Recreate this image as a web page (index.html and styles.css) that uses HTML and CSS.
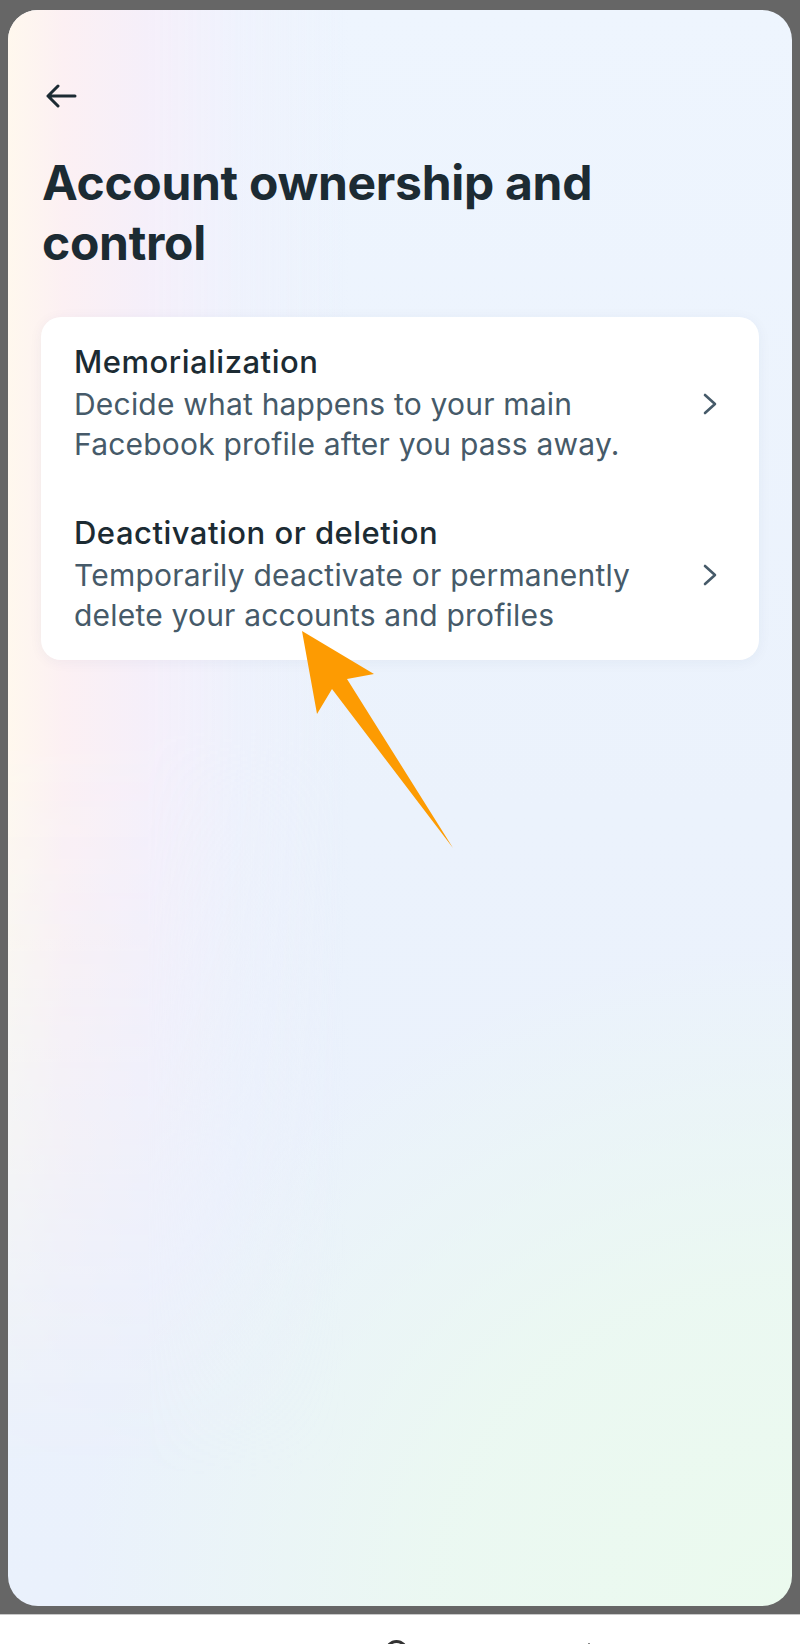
FILE: index.html
```html
<!DOCTYPE html>
<html lang="en">
<head>
    <meta charset="UTF-8">
    <meta name="viewport" content="width=device-width, initial-scale=1.0">
    <link rel="stylesheet" href="styles.css">
    <title>Account ownership and control</title>
</head>
<body>
    <div class="screen">
        <div class="sheet">
            <button class="back" aria-label="Back">
                <svg width="32" height="24" viewBox="0 0 32 24">
                    <path d="M30 12H3M13 2L3 12l10 10" fill="none" stroke="#1c2b33" stroke-width="3" stroke-linecap="round" stroke-linejoin="round"/>
                </svg>
            </button>

            <h1 class="title">Account ownership and control</h1>

            <div class="card">
                <a class="item" href="#">
                    <div class="item-text">
                        <div class="item-title">Memorialization</div>
                        <div class="item-desc">Decide what happens to your main Facebook profile after you pass away.</div>
                    </div>
                    <svg class="chevron" width="14" height="22" viewBox="0 0 14 22">
                        <path d="M2 2l10 9-10 9" fill="none" stroke="#465a69" stroke-width="2.6" stroke-linecap="round" stroke-linejoin="round"/>
                    </svg>
                </a>
                <a class="item" href="#">
                    <div class="item-text">
                        <div class="item-title">Deactivation or deletion</div>
                        <div class="item-desc">Temporarily deactivate or permanently delete your accounts and profiles</div>
                    </div>
                    <svg class="chevron" width="14" height="22" viewBox="0 0 14 22">
                        <path d="M2 2l10 9-10 9" fill="none" stroke="#465a69" stroke-width="2.6" stroke-linecap="round" stroke-linejoin="round"/>
                    </svg>
                </a>
            </div>
        </div>
    </div>

    <div class="navbar">
        <span class="nav-home"></span>
        <span class="nav-back"></span>
    </div>

    <!-- annotation pointer drawn over the card -->
    <svg class="pointer" width="170" height="230" viewBox="290 625 170 230">
        <polygon points="302,631 374,674 347,679 453,848 332,689 317,714" fill="#fd9b02"/>
    </svg>
</body>
</html>
```

FILE: styles.css
```css
* {
    box-sizing: border-box;
}

body {
    margin: 0;
    height: 1644px;
    overflow: hidden;
    position: relative;
    background-color: #666;
    font-family: Inter, "Noto Sans", sans-serif;
}

.screen {
    padding: 10px 8px 8px;
}

.sheet {
    position: relative;
    z-index: 0;
    overflow: hidden;
    height: 1596px;
    border-radius: 30px;
    padding: 74px 33px 0 33px;
    background:
        radial-gradient(ellipse 720px 660px at 100% 100%, rgba(235, 250, 238, 1) 0%, rgba(235, 249, 240, 0.85) 50%, rgba(235, 249, 240, 0) 100%),
        linear-gradient(180deg, #eef5fe 0%, #ebf2fc 50%, #eaf1fc 100%);
}

/* warm tint along the left edge, fading out towards the bottom */
.sheet::before {
    content: "";
    position: absolute;
    top: 0;
    left: 0;
    width: 360px;
    height: 100%;
    z-index: -1;
    background: linear-gradient(90deg, #fff8ee 0px, #fcf0f3 55px, #f5effa 140px, rgba(240, 241, 252, 0.6) 230px, rgba(237, 243, 254, 0) 340px);
    -webkit-mask-image: linear-gradient(180deg, #000 0%, #000 45%, rgba(0, 0, 0, 0.45) 72%, rgba(0, 0, 0, 0) 92%);
    mask-image: linear-gradient(180deg, #000 0%, #000 45%, rgba(0, 0, 0, 0.45) 72%, rgba(0, 0, 0, 0) 92%);
}

.back {
    display: block;
    width: 32px;
    height: 24px;
    margin-left: 4px;
    padding: 0;
    border: none;
    background: none;
    cursor: pointer;
}

.back svg {
    display: block;
}

.title {
    margin: 45px 0 0 1px;
    font-size: 48px;
    line-height: 60px;
    font-weight: 700;
    letter-spacing: -0.3px;
    color: #1c2b33;
}

.card {
    margin-top: 44px;
    background-color: #fff;
    border-radius: 20px;
    padding: 26px 42px 25px 33px;
    box-shadow: 0 2px 14px rgba(40, 60, 90, 0.05);
}

.item {
    display: flex;
    align-items: center;
    gap: 20px;
    text-decoration: none;
}

.item + .item {
    margin-top: 50px;
}

.item-text {
    flex: 1;
}

.item-title {
    font-size: 31px;
    line-height: 38px;
    font-weight: 500;
    letter-spacing: 0.5px;
    color: #1c2b33;
}

.item-desc {
    margin-top: 3px;
    font-size: 30px;
    line-height: 40px;
    letter-spacing: 0.2px;
    color: #465a69;
}

.chevron {
    flex: none;
}

.navbar {
    height: 30px;
    background-color: #fff;
    border-top: 1px solid #c8c8c8;
    position: relative;
    overflow: hidden;
}

.nav-home {
    position: absolute;
    left: 385px;
    top: 25px;
    width: 23px;
    height: 23px;
    border: 3px solid #333;
    border-radius: 50%;
}

.nav-back {
    position: absolute;
    left: 588px;
    top: 28px;
    width: 2px;
    height: 4px;
    background-color: #888;
}

.pointer {
    position: absolute;
    left: 290px;
    top: 625px;
}
```
